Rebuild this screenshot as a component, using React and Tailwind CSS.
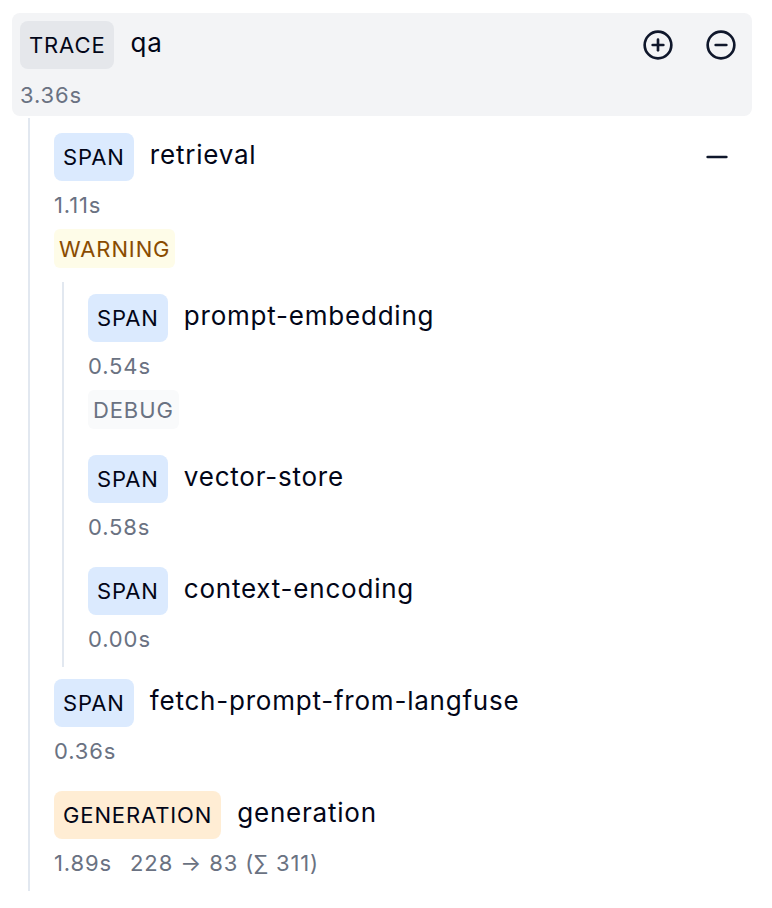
import { CirclePlus, CircleMinus, Minus } from "lucide-react";

const tree = {
  type: "TRACE",
  name: "qa",
  duration: "3.36s",
  children: [
    {
      type: "SPAN",
      name: "retrieval",
      duration: "1.11s",
      level: "WARNING",
      collapsible: true,
      children: [
        { type: "SPAN", name: "prompt-embedding", duration: "0.54s", level: "DEBUG" },
        { type: "SPAN", name: "vector-store", duration: "0.58s" },
        { type: "SPAN", name: "context-encoding", duration: "0.00s" },
      ],
    },
    { type: "SPAN", name: "fetch-prompt-from-langfuse", duration: "0.36s" },
    {
      type: "GENERATION",
      name: "generation",
      duration: "1.89s",
      usage: "228 → 83 (∑ 311)",
    },
  ],
};

const typeStyles = {
  TRACE: "bg-gray-200",
  SPAN: "bg-blue-100",
  GENERATION: "bg-orange-100",
};

const levelStyles = {
  WARNING: "bg-yellow-50 text-yellow-800",
  DEBUG: "bg-gray-50 text-gray-500",
};

const TypeBadge = ({ type }) => (
  <span
    className={`h-12 px-[9px] flex items-center rounded-lg text-[22px] leading-7 tracking-[0.04em] text-slate-950 ${typeStyles[type]}`}
  >
    {type}
  </span>
);

const Name = ({ children }) => (
  <span className="text-[26px] leading-8 tracking-[0.03em] text-slate-950 -mt-1">{children}</span>
);

const Node = ({ node }) => {
  const hasChildren = node.children && node.children.length > 0;
  return (
    <div className={hasChildren ? "pt-3" : "pt-3 pb-[14px]"}>
      <div className="flex items-center gap-4">
        <TypeBadge type={node.type} />
        <Name>{node.name}</Name>
        {node.collapsible && (
          <button className="ml-auto mr-[19px] text-slate-900">
            <Minus size={32} strokeWidth={2} />
          </button>
        )}
      </div>
      <div className="mt-[10px] flex gap-[18px] text-[22px] leading-7 tracking-[0.04em] text-gray-500">
        <span>{node.duration}</span>
        {node.usage && <span>{node.usage}</span>}
      </div>
      {node.level && (
        <div className="mt-[10px] flex">
          <span
            className={`h-[39px] px-[5px] flex items-center rounded-md text-[22px] leading-7 tracking-[0.04em] ${levelStyles[node.level]}`}
          >
            {node.level}
          </span>
        </div>
      )}
      {hasChildren && (
        <div className="mt-[14px] ml-2 border-l-2 border-slate-200 pl-6">
          {node.children.map((child) => (
            <Node key={child.name} node={child} />
          ))}
        </div>
      )}
    </div>
  );
};

export default function App() {
  return (
    <div
      className="min-h-screen bg-white pl-3 pr-5 pt-[13px]"
      style={{ fontFamily: "Inter, 'Noto Sans', sans-serif" }}
    >
      {/* trace header */}
      <div className="rounded-lg bg-gray-100 pt-2 px-2 pb-[7px]">
        <div className="flex items-center gap-4">
          <TypeBadge type={tree.type} />
          <Name>{tree.name}</Name>
          <div className="ml-auto mr-[7px] flex items-center gap-[31px] text-slate-900">
            <button>
              <CirclePlus size={32} strokeWidth={2} />
            </button>
            <button>
              <CircleMinus size={32} strokeWidth={2} />
            </button>
          </div>
        </div>
        <div className="mt-3 text-[22px] leading-7 tracking-[0.04em] text-gray-500">{tree.duration}</div>
      </div>

      {/* observations */}
      <div className="mt-[2px] pt-[3px] ml-4 border-l-2 border-slate-200 pl-6">
        {tree.children.map((child) => (
          <Node key={child.name} node={child} />
        ))}
      </div>
    </div>
  );
}
